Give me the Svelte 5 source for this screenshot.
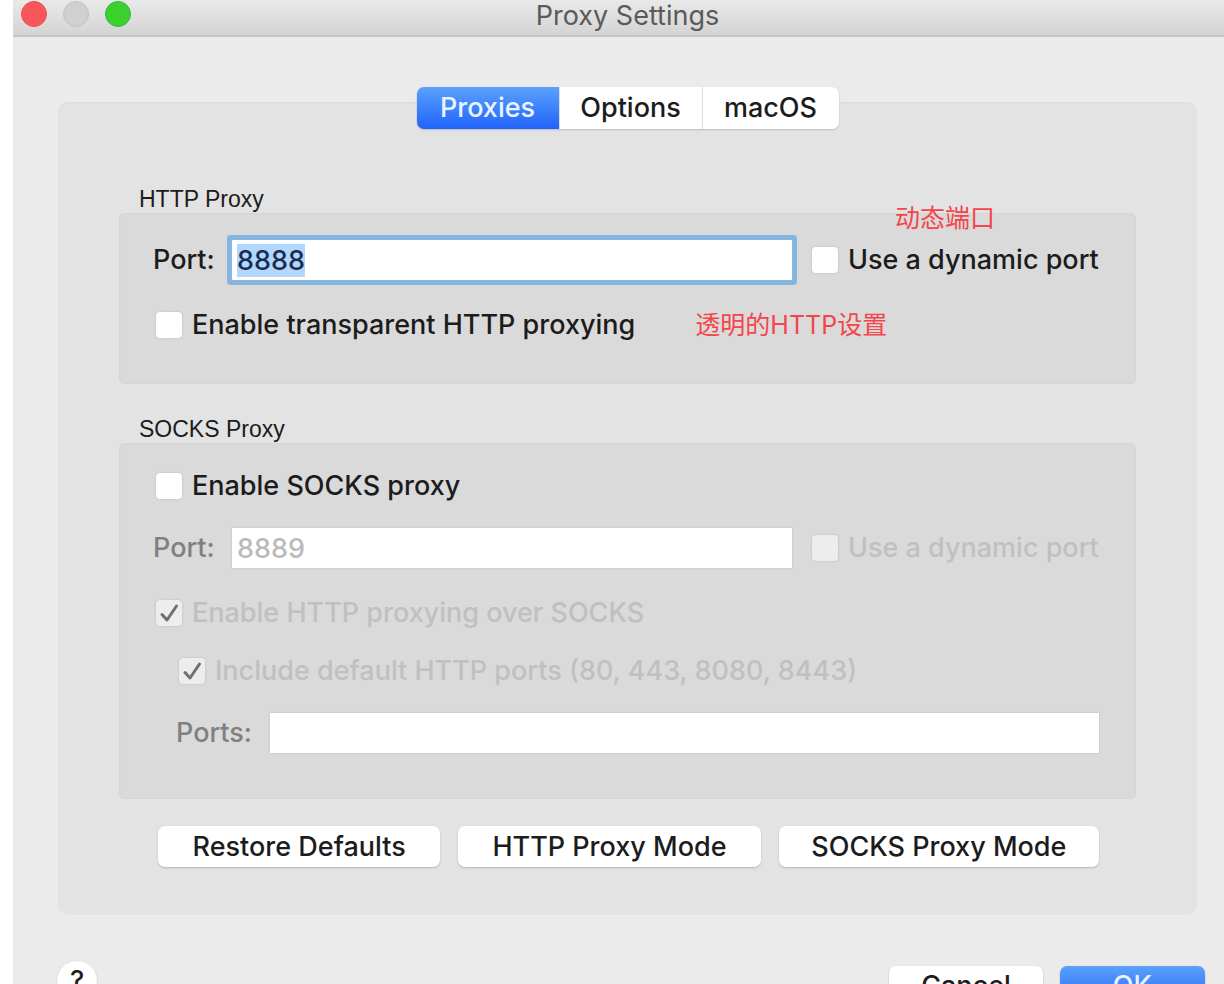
<script lang="ts">
	import { onMount } from 'svelte';

	let tabs = ['Proxies', 'Options', 'macOS'];
	let active = $state('Proxies');

	let httpPort = $state('8888');
	let httpDynamic = $state(false);
	let transparent = $state(false);

	let socksEnabled = $state(false);
	let socksPort = $state('8889');
	let socksDynamic = $state(false);
	let httpOverSocks = $state(true);
	let defaultPorts = $state(true);
	let ports = $state('');

	let portInput: HTMLInputElement;

	onMount(() => {
		portInput.focus();
		portInput.select();
	});

	function restore() {
		httpPort = '8888';
		socksPort = '8889';
		httpDynamic = transparent = socksEnabled = socksDynamic = false;
		httpOverSocks = defaultPorts = true;
		ports = '';
	}
</script>

{#snippet tick()}
	<svg class="tick" viewBox="0 0 26 26" aria-hidden="true">
		<path d="M6 14.5 L11 20 L20.500 6" />
	</svg>
{/snippet}

<div class="window">
	<header>
		<div class="lights">
			<button class="light red" aria-label="Close"></button>
			<button class="light grey" aria-label="Minimize" disabled></button>
			<button class="light green" aria-label="Zoom"></button>
		</div>
		<h1>Proxy Settings</h1>
	</header>

	<main>
		<nav class="tabs">
			{#each tabs as tab}
				<button class:active={active === tab} onclick={() => (active = tab)}>{tab}</button>
			{/each}
		</nav>

		<section>
			<h2>HTTP Proxy</h2>
			<div class="group http">
				<div class="row">
					<label class="name" for="http-port">Port:</label>
					<input class="field" id="http-port" type="text" bind:value={httpPort} bind:this={portInput} />
					<label class="check dynamic">
						<span class="box"><input type="checkbox" bind:checked={httpDynamic} />{@render tick()}</span>
						Use a dynamic port
						<span class="note above">动态端口</span>
					</label>
				</div>
				<div class="row">
					<label class="check">
						<span class="box"><input type="checkbox" bind:checked={transparent} />{@render tick()}</span>
						Enable transparent HTTP proxying
					</label>
					<span class="note beside">透明的HTTP设置</span>
				</div>
			</div>
		</section>

		<section>
			<h2>SOCKS Proxy</h2>
			<div class="group socks" class:off={!socksEnabled}>
				<div class="row">
					<label class="check">
						<span class="box"><input type="checkbox" bind:checked={socksEnabled} />{@render tick()}</span>
						Enable SOCKS proxy
					</label>
				</div>
				<div class="row">
					<label class="name" for="socks-port">Port:</label>
					<input class="field" id="socks-port" type="text" bind:value={socksPort} disabled={!socksEnabled} />
					<label class="check dynamic sub">
						<span class="box"><input type="checkbox" bind:checked={socksDynamic} disabled={!socksEnabled} />{@render tick()}</span>
						Use a dynamic port
					</label>
				</div>
				<div class="row">
					<label class="check sub">
						<span class="box"><input type="checkbox" bind:checked={httpOverSocks} disabled={!socksEnabled} />{@render tick()}</span>
						Enable HTTP proxying over SOCKS
					</label>
				</div>
				<div class="row indent">
					<label class="check sub">
						<span class="box"><input type="checkbox" bind:checked={defaultPorts} disabled={!socksEnabled} />{@render tick()}</span>
						Include default HTTP ports (80, 443, 8080, 8443)
					</label>
				</div>
				<div class="row indent">
					<label class="name wide" for="socks-ports">Ports:</label>
					<input class="field" id="socks-ports" type="text" bind:value={ports} disabled={!socksEnabled} />
				</div>
			</div>
		</section>

		<div class="modes">
			<button class="push restore" onclick={restore}>Restore Defaults</button>
			<button class="push http-mode">HTTP Proxy Mode</button>
			<button class="push socks-mode">SOCKS Proxy Mode</button>
		</div>
	</main>

	<footer>
		<button class="help" aria-label="Help">?</button>
		<button class="push cancel">Cancel</button>
		<button class="push ok">OK</button>
	</footer>
</div>

<style>
	:global(body) {
		background: #fff;
		overflow: hidden;
	}

	/* the window hangs over the right edge of the page */
	.window {
		margin: 0 -18px 0 13px;
		height: 100vh;
		overflow: hidden;
		background: #ebebeb;
		color: #1c1c1c;
		font-family: Inter, 'Noto Sans CJK SC', sans-serif;
		font-size: 27px;
		font-weight: 450;
		line-height: 32px;
	}

	button,
	input {
		font: inherit;
		color: inherit;
		border: 0;
		margin: 0;
		padding: 0;
	}

	header {
		position: relative;
		height: 35px;
		border-bottom: 2px solid #c4c4c4;
		background: linear-gradient(#e9e9e9, #d4d4d4);
	}

	.lights {
		position: absolute;
		top: 1px;
		left: 8px;
		display: flex;
		gap: 16px;
	}

	.light {
		width: 26px;
		height: 26px;
		border-radius: 50%;
	}

	.red {
		background: #f7565a;
		border: 1px solid #e8504f;
	}

	.grey {
		background: #d0d0ce;
		border: 1px solid #c2c2c0;
	}

	.green {
		background: #3bd02b;
		border: 1px solid #2fb944;
	}

	h1 {
		margin: 0;
		text-align: center;
		font-size: 27px;
		font-weight: 400;
		line-height: 32px;
		color: #5a5a5a;
	}

	main {
		margin: 65px 45px 0;
		padding: 0 61px 48px;
		border-radius: 10px;
		background: #e3e3e3;
		box-shadow: inset 0 1px 1px #dcdcdc;
	}

	.tabs {
		display: flex;
		width: max-content;
		margin: 0 auto;
		position: relative;
		top: -15px;
		border-radius: 7px;
		background: #dedede;
		gap: 1px;
		box-shadow: 0 1px 2px #bbb;
	}

	.tabs button {
		width: 142px;
		height: 42px;
		background: #fff;
	}

	.tabs button:first-child {
		border-radius: 7px 0 0 7px;
	}

	.tabs button:last-child {
		width: 136px;
		border-radius: 0 7px 7px 0;
	}

	.tabs .active {
		color: #e8f4ff;
		background: linear-gradient(#5ba1fc, #2163fa);
	}

	section {
		margin-top: 41px;
	}

	section + section {
		margin-top: 31px;
	}

	h2 {
		margin: 0;
		padding: 0 20px;
		font-family: 'Liberation Sans', sans-serif;
		font-size: 23px;
		font-weight: 400;
		line-height: 28px;
	}

	.group {
		padding: 27px 37px 46px 34px;
		border-radius: 6px;
		background: #dadada;
		box-shadow: inset 0 0 2px #cdcdcd;
	}

	.socks {
		padding-top: 30px;
	}

	.row {
		display: flex;
		align-items: center;
	}

	.row + .row {
		margin-top: 32px;
	}

	.socks .row:nth-child(2),
	.socks .row:last-child {
		margin-top: 29px;
	}

	.indent {
		padding-left: 23px;
	}

	.name {
		width: 79px;
	}

	.wide {
		width: 94px;
	}

	.off .name {
		color: #808080;
	}

	.field {
		flex: 1;
		min-width: 0;
		height: 40px;
		padding: 0 5px;
		box-sizing: border-box;
		background: #fff;
		outline: none;
		box-shadow: 0 0 2px #bbb;
	}

	.field:focus {
		border-radius: 1px;
		box-shadow: 0 0 0 5px #86b5e2;
	}

	.field::selection {
		background: #b0d7fd;
		color: #1b2c4d;
	}

	.field:disabled {
		color: #bababa;
	}

	.check {
		position: relative;
		display: flex;
		align-items: center;
		gap: 10px;
		height: 26px;
		margin-left: 3px;
		white-space: nowrap;
	}

	.dynamic {
		width: 287px;
		margin-left: 20px;
	}

	.off .sub {
		color: #c0c0c0;
	}

	.box {
		display: grid;
		width: 26px;
		height: 26px;
	}

	.box input,
	.tick {
		grid-area: 1 / 1;
		width: 26px;
		height: 26px;
	}

	.box input {
		appearance: none;
		border-radius: 4px;
		background: #fff;
		box-shadow: 0 0 2px #b4b4b4;
	}

	.box input:disabled {
		background: #ededed;
	}

	.tick {
		display: none;
		fill: none;
		stroke: #707070;
		stroke-width: 3;
		stroke-linecap: round;
		stroke-linejoin: round;
		pointer-events: none;
	}

	input:checked + .tick {
		display: block;
	}

	.note {
		color: #f5444b;
		font-size: 25px;
		font-weight: 400;
		line-height: 26px;
	}

	.above {
		position: absolute;
		left: 83px;
		bottom: 42px;
	}

	.beside {
		margin-left: 60px;
	}

	.modes {
		display: flex;
		gap: 18px;
		margin: 27px 37px 0 39px;
	}

	.push {
		height: 41px;
		border-radius: 7px;
		background: #fff;
		box-shadow: 0 1px 2px #b4b4b4;
		white-space: nowrap;
	}

	.restore {
		flex: 282;
	}

	.http-mode {
		flex: 302;
	}

	.socks-mode {
		flex: 320;
	}

	footer {
		display: flex;
		align-items: center;
		gap: 17px;
		margin: 46px 37px 0 44px;
	}

	.help {
		width: 40px;
		height: 40px;
		margin: 0 auto 10px 0;
		border-radius: 50%;
		background: #fff;
		box-shadow: 0 1px 2px #b4b4b4;
	}

	.cancel {
		width: 154px;
	}

	.ok {
		width: 145px;
		color: #e8f4ff;
		background: linear-gradient(#5ba1fc, #2163fa);
	}
</style>
